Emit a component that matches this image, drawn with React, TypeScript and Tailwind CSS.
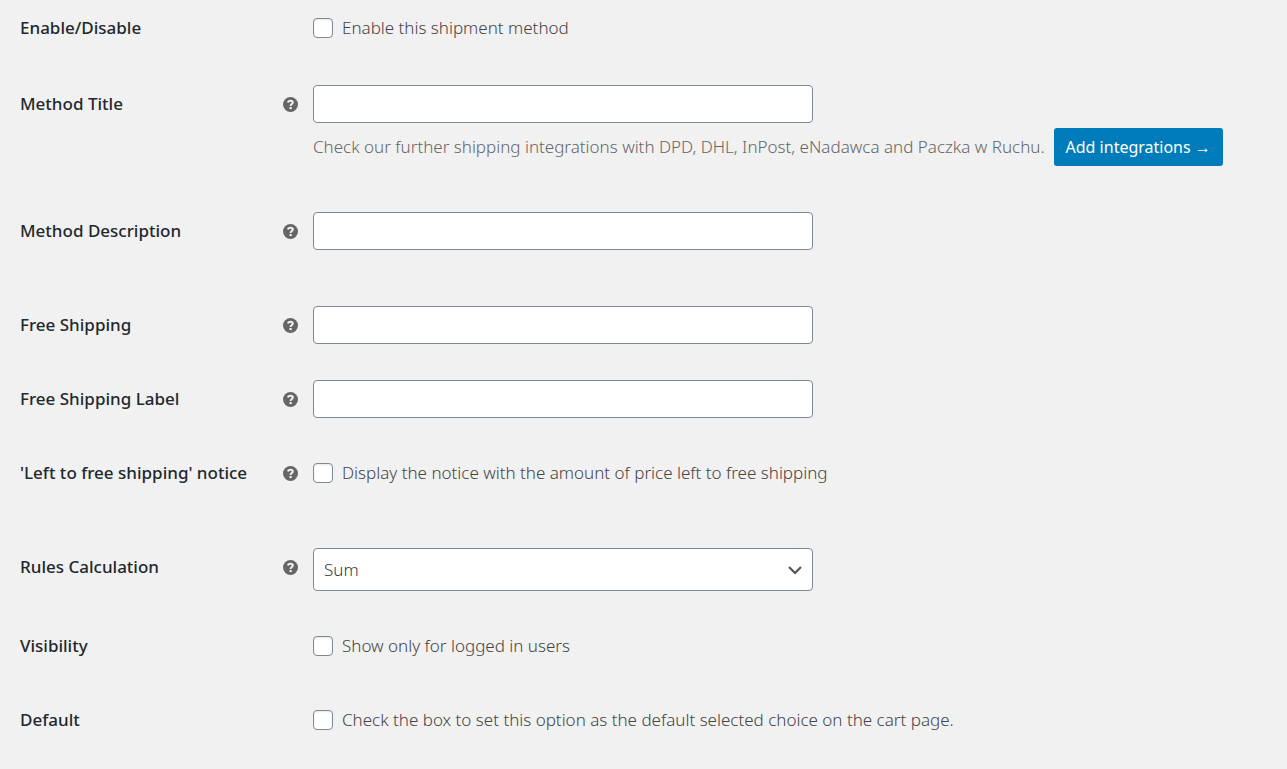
import type { ReactNode } from "react";

const inputClass =
  "block h-[38px] w-full max-w-[500px] rounded border border-[#7e8993] bg-white px-2 text-[#32373c]";

function HelpTip() {
  return (
    <svg className="h-[15px] w-[15px]" viewBox="0 0 15 15" aria-hidden="true">
      <circle cx="7.5" cy="7.5" r="7.5" fill="#666" />
      <path
        d="M5 5.500C5.200 4 6.200 3.700 7.500 3.700c1.400 0 2.300.6 2.300 1.700C9.800 7 7.600 6.900 7.600 8.900"
        fill="none"
        stroke="#f1f1f1"
        strokeWidth="2"
      />
      <rect x="6.500" y="10" width="2.200" height="2.100" fill="#f1f1f1" />
    </svg>
  );
}

type RowProps = {
  id: string;
  label: string;
  help?: boolean;
  className: string;
  children: ReactNode;
};

function Row({ id, label, help, className, children }: RowProps) {
  return (
    <div className={`grid grid-cols-[263px_30px_minmax(0,1fr)] ${className}`}>
      <label htmlFor={id} className="font-medium leading-[38px] text-[#23282d]">
        {label}
      </label>
      <div className="flex h-[38px] items-center">{help && <HelpTip />}</div>
      <div>{children}</div>
    </div>
  );
}

function TextField({ id }: { id: string }) {
  return <input id={id} type="text" className={inputClass} />;
}

function CheckField({ id, text }: { id: string; text: string }) {
  return (
    <div className="flex h-[38px] items-center gap-[9px]">
      <input
        id={id}
        type="checkbox"
        className="h-5 w-5 shrink-0 appearance-none rounded border border-[#7e8993] bg-white shadow-[inset_0_1px_2px_rgba(0,0,0,0.1)]"
      />
      <label htmlFor={id}>{text}</label>
    </div>
  );
}

export default function App() {
  return (
    <main className="min-h-screen bg-[#f1f1f1] px-5 pt-[9px] font-['Noto_Sans',sans-serif] text-[17px] font-light text-[#444]">
      <form>
        <Row id="enabled" label="Enable/Disable" className="pb-[38px]">
          <CheckField id="enabled" text="Enable this shipment method" />
        </Row>
        <Row id="title" label="Method Title" help className="pb-[46px]">
          <TextField id="title" />
          <div className="mt-[5px] flex items-center gap-[9px]">
            <p className="text-[#666]">
              Check our further shipping integrations with DPD, DHL, InPost,
              eNadawca and Paczka w Ruchu.
            </p>
            <a
              href="#integrations"
              className="flex h-[38px] shrink-0 items-center rounded-[3px] bg-[#007cba] px-3 text-[16px] font-normal text-white"
            >
              Add integrations →
            </a>
          </div>
        </Row>
        <Row
          id="description"
          label="Method Description"
          help
          className="pb-14"
        >
          <TextField id="description" />
        </Row>
        <Row id="free" label="Free Shipping" help className="pb-9">
          <TextField id="free" />
        </Row>
        <Row id="free-label" label="Free Shipping Label" help className="pb-9">
          <TextField id="free-label" />
        </Row>
        <Row
          id="notice"
          label="'Left to free shipping' notice"
          help
          className="pb-14"
        >
          <CheckField
            id="notice"
            text="Display the notice with the amount of price left to free shipping"
          />
        </Row>
        <Row id="rules" label="Rules Calculation" help className="pb-9">
          <div className="relative max-w-[500px]">
            <select
              id="rules"
              className="block h-[43px] w-full appearance-none rounded border border-[#7e8993] bg-white pr-8 pl-[10px] text-[#32373c]"
            >
              <option>Sum</option>
            </select>
            <svg
              className="pointer-events-none absolute top-1/2 right-[10px] h-4 w-4 -translate-y-1/2"
              viewBox="0 0 16 16"
              fill="none"
              stroke="#555"
              strokeWidth="2.2"
              aria-hidden="true"
            >
              <path d="M2 5l6 6 6-6" />
            </svg>
          </div>
        </Row>
        <Row id="visibility" label="Visibility" className="pb-9">
          <CheckField id="visibility" text="Show only for logged in users" />
        </Row>
        <Row id="default" label="Default" className="pb-0">
          <CheckField
            id="default"
            text="Check the box to set this option as the default selected choice on the cart page."
          />
        </Row>
      </form>
    </main>
  );
}
